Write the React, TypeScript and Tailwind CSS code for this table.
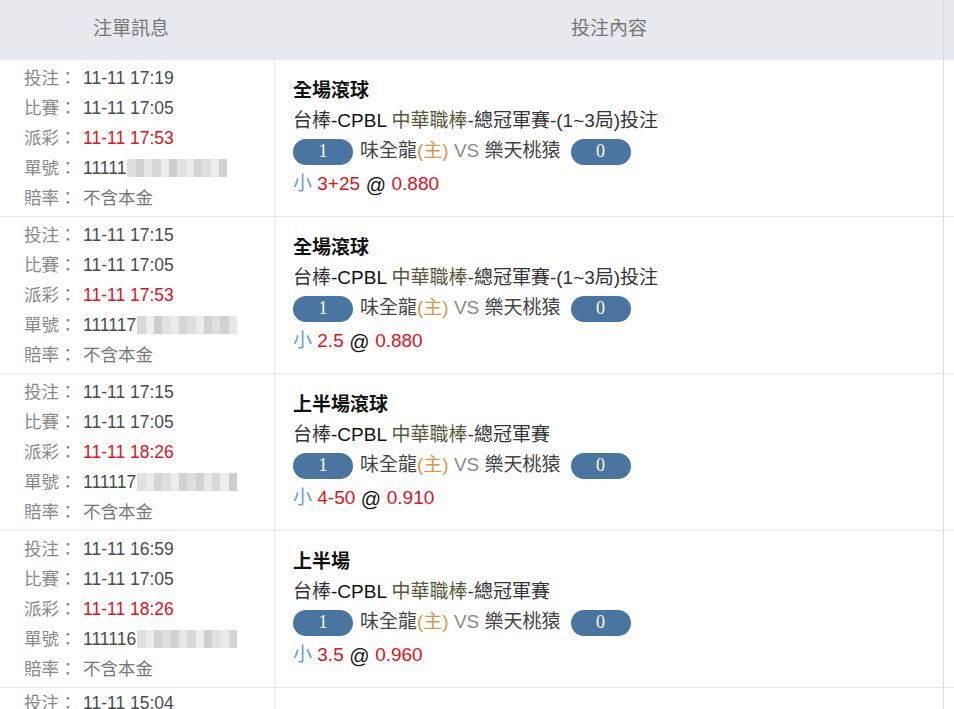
import React from "react";

type Row = {
  bet: string;
  match: string;
  pay: string;
  id: string;
  title: string;
  league: boolean;
  line: string;
  odds: string;
};

const rows: Row[] = [
  { bet: "11-11 17:19", match: "11-11 17:05", pay: "11-11 17:53", id: "11111", title: "全場滾球", league: true, line: "3+25", odds: "0.880" },
  { bet: "11-11 17:15", match: "11-11 17:05", pay: "11-11 17:53", id: "111117", title: "全場滾球", league: true, line: "2.5", odds: "0.880" },
  { bet: "11-11 17:15", match: "11-11 17:05", pay: "11-11 18:26", id: "111117", title: "上半場滾球", league: false, line: "4-50", odds: "0.910" },
  { bet: "11-11 16:59", match: "11-11 17:05", pay: "11-11 18:26", id: "111116", title: "上半場", league: false, line: "3.5", odds: "0.960" },
];

const font = { fontFamily: '"Liberation Sans", "Noto Sans CJK TC", sans-serif' };

function Blur({ seed }: { seed: number }) {
  const shades = ["#dcdedf", "#cfd1d3", "#e6e7e8", "#d6d8d9", "#eeeeef", "#cbcdcf", "#e0e1e2", "#e9eaeb", "#d3d5d7", "#dddfe0", "#ebeced", "#d0d2d4"];
  return (
    <span className="inline-flex h-[18px] w-[100px] ml-[1px] blur-[0.6px] align-middle">
      {shades.map((c, i) => (
        <span key={i} className="h-full flex-1" style={{ background: shades[(i + seed) % shades.length] }} />
      ))}
    </span>
  );
}

function Pill({ n }: { n: string }) {
  return (
    <span
      className="inline-flex h-[26px] w-[60px] items-center justify-center rounded-full bg-[#4a75a0] text-[18px] text-white"
      style={{ fontFamily: '"Liberation Serif", serif' }}
    >
      {n}
    </span>
  );
}

function InfoLine({ label, children }: { label: string; children: React.ReactNode }) {
  return (
    <div className="flex h-[30px] items-center">
      <span className="w-[59px] text-[#888]">{label}：</span>
      <span>{children}</span>
    </div>
  );
}

export default function App() {
  return (
    <div className="h-[709px] w-[954px] overflow-hidden bg-white" style={font}>
      <div className="flex h-[60px] bg-[#e6e9ee] text-[19px] text-[#777]">
        <div className="flex w-[275px] items-center justify-center border-r border-[#dde0e4] pr-[12px] pb-[2px]">注單訊息</div>
        <div className="flex w-[669px] items-center justify-center border-r border-[#d6d9dd] pb-[2px]">投注內容</div>
        <div className="flex-1" />
      </div>
      {rows.map((r, i) => (
        <div key={i} className="flex h-[157px] border-b border-[#e8e8e8]">
          <div className="flex w-[275px] flex-col justify-center border-r border-[#e8e8e8] pl-[24px] text-[17.5px] text-[#474c52]">
            <InfoLine label="投注">{r.bet}</InfoLine>
            <InfoLine label="比賽">{r.match}</InfoLine>
            <InfoLine label="派彩">
              <span className="text-[#e0121c]">{r.pay}</span>
            </InfoLine>
            <InfoLine label="單號">
              <span className="inline-flex items-center">
                {r.id}
                <Blur seed={i * 3} />
              </span>
            </InfoLine>
            <InfoLine label="賠率">
              <span className="text-[#777]">不含本金</span>
            </InfoLine>
          </div>
          <div className="flex w-[669px] flex-col justify-center border-r border-[#dcdcdc] pl-[18px] text-[19px] text-[#333]">
            <div className="flex h-[30px] items-center font-bold text-[#111]">{r.title}</div>
            <div className="flex h-[30px] items-center whitespace-pre">
              <span>台棒</span>
              <span className="text-[#111]">-CPBL </span>
              <span className="text-[#5a5838]">中華職棒</span>
              <span>-總冠軍賽{r.league ? "-(1~3局)投注" : ""}</span>
            </div>
            <div className="flex h-[30px] items-center whitespace-pre">
              <Pill n="1" />
              <span className="ml-[7px] text-[#444]">味全龍</span>
              <span className="text-[#d4994a]">(主)</span>
              <span className="text-[#8a8a8a]"> VS </span>
              <span className="text-[#444]">樂天桃猿</span>
              <span className="ml-[10px]" />
              <Pill n="0" />
            </div>
            <div className="mt-[3px] flex h-[30px] items-center whitespace-pre">
              <span className="text-[#6a97d8]">小 </span>
              <span className="text-[#e0121c]">{r.line}</span>
              <span className="text-[20px] text-[#111]"> @ </span>
              <span className="text-[#e0121c]">{r.odds}</span>
            </div>
          </div>
          <div className="flex-1" />
        </div>
      ))}
      <div className="flex h-[60px]">
        <div className="w-[275px] border-r border-[#e8e8e8] pl-[24px] text-[17.5px] text-[#474c52]">
          <div className="flex h-[30px] items-center">
            <span className="w-[59px] text-[#888]">投注：</span>
            <span>11-11 15:04</span>
          </div>
        </div>
        <div className="w-[669px] border-r border-[#dcdcdc]" />
      </div>
    </div>
  );
}
